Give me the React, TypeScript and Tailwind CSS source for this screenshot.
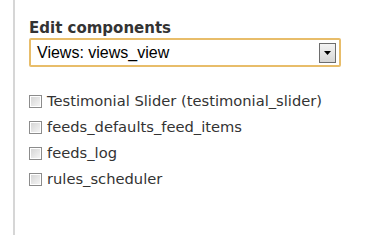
import React from 'react';

const components = [
  'Testimonial Slider (testimonial_slider)',
  'feeds_defaults_feed_items',
  'feeds_log',
  'rules_scheduler',
];

function Checkbox() {
  return (
    <span className="flex h-[13px] w-[13px] shrink-0 items-center justify-center border border-[#8c8c8c] bg-white">
      <span className="h-[9px] w-[9px] bg-gradient-to-br from-[#d6d6d6] to-[#f4f4f4]" />
    </span>
  );
}

export default function App() {
  return (
    <div className="h-[235px] w-[369px] bg-white">
      <div className="ml-[13px] h-full border-l-2 border-[#d6d6d6] pl-[14px] pt-[19px]">
        <h2 className="font-['DejaVu_Sans',sans-serif] text-[15px] font-bold leading-[18px] text-[#333]">
          Edit components
        </h2>
        <div className="mt-px flex h-[29px] w-[312px] items-center justify-between rounded-[2px] border-2 border-[#e8bd6a] bg-white pl-[6px] pr-[3px]">
          <span className="font-['Liberation_Sans',Arial,sans-serif] text-[16px] leading-none text-black">
            Views: views_view
          </span>
          <span className="flex h-[20px] w-[17px] items-center justify-center border border-[#6d6d6d] bg-gradient-to-b from-[#f4f4f4] to-[#d6d6d6]">
            <svg width="7" height="4" viewBox="0 0 7 4">
              <path d="M0 0h7L3.5 4z" fill="#000" />
            </svg>
          </span>
        </div>
        <ul className="mt-[21px]">
          {components.map((name) => (
            <li key={name} className="flex h-[26px] items-center gap-[5px]">
              <Checkbox />
              <span className="font-['DejaVu_Sans',sans-serif] text-[14.7px] leading-[18px] text-[#333]">
                {name}
              </span>
            </li>
          ))}
        </ul>
      </div>
    </div>
  );
}
